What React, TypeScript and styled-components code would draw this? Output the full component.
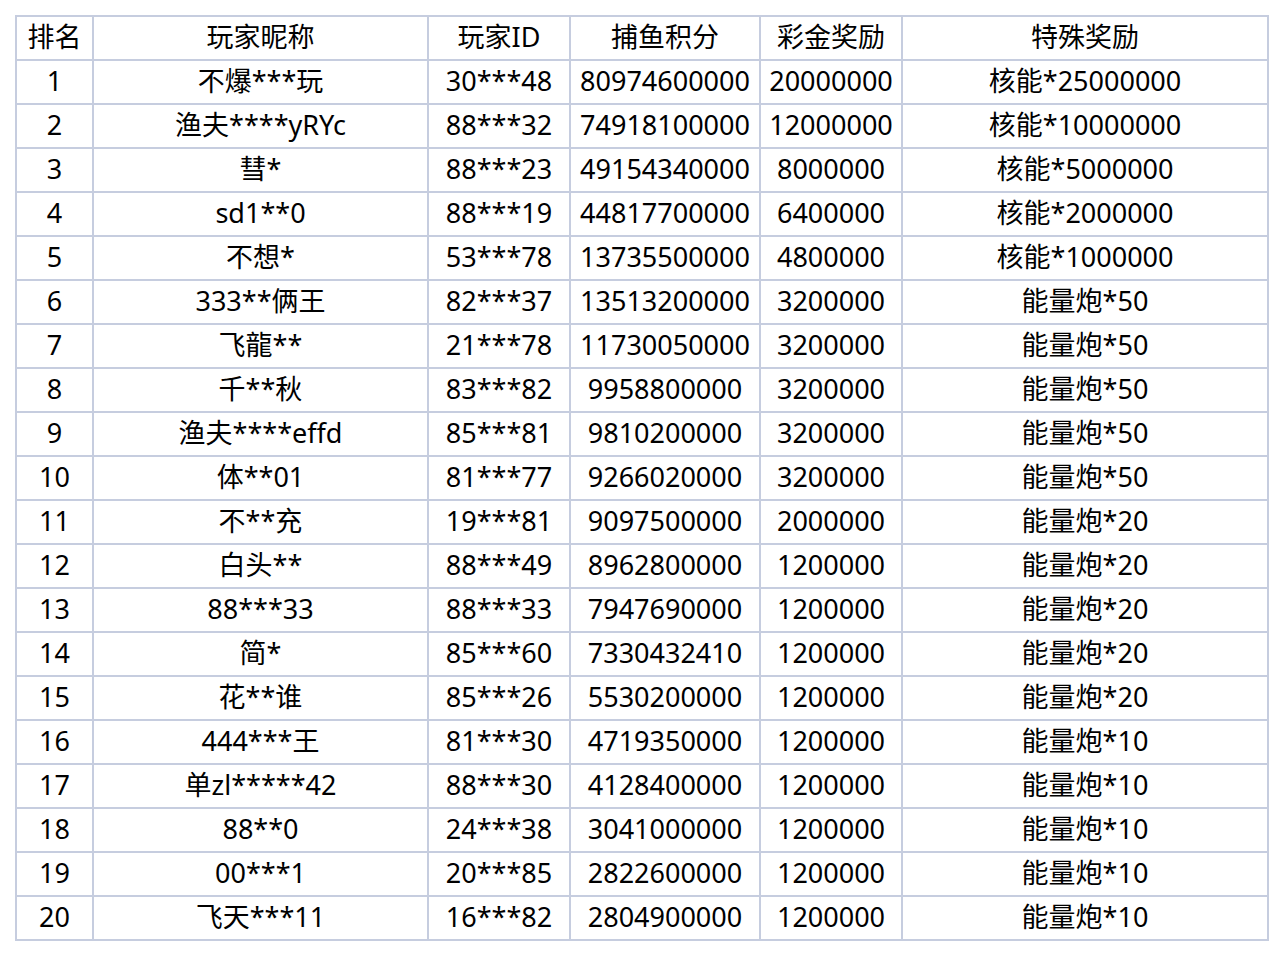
import { createGlobalStyle } from "styled-components";
import styled from "styled-components";

const GlobalStyle = createGlobalStyle`
  html, body {
    margin: 0;
    padding: 0;
    background: #ffffff;
  }
  body {
    font-family: "Noto Sans", "Noto Sans CJK SC", sans-serif;
  }
`;

const headers = ["排名", "玩家昵称", "玩家ID", "捕鱼积分", "彩金奖励", "特殊奖励"];

const rows: string[][] = [
  ["1", "不爆***玩", "30***48", "80974600000", "20000000", "核能*25000000"],
  ["2", "渔夫****yRYc", "88***32", "74918100000", "12000000", "核能*10000000"],
  ["3", "彗*", "88***23", "49154340000", "8000000", "核能*5000000"],
  ["4", "sd1**0", "88***19", "44817700000", "6400000", "核能*2000000"],
  ["5", "不想*", "53***78", "13735500000", "4800000", "核能*1000000"],
  ["6", "333**俩王", "82***37", "13513200000", "3200000", "能量炮*50"],
  ["7", "飞龍**", "21***78", "11730050000", "3200000", "能量炮*50"],
  ["8", "千**秋", "83***82", "9958800000", "3200000", "能量炮*50"],
  ["9", "渔夫****effd", "85***81", "9810200000", "3200000", "能量炮*50"],
  ["10", "体**01", "81***77", "9266020000", "3200000", "能量炮*50"],
  ["11", "不**充", "19***81", "9097500000", "2000000", "能量炮*20"],
  ["12", "白头**", "88***49", "8962800000", "1200000", "能量炮*20"],
  ["13", "88***33", "88***33", "7947690000", "1200000", "能量炮*20"],
  ["14", "简*", "85***60", "7330432410", "1200000", "能量炮*20"],
  ["15", "花**谁", "85***26", "5530200000", "1200000", "能量炮*20"],
  ["16", "444***王", "81***30", "4719350000", "1200000", "能量炮*10"],
  ["17", "单zl*****42", "88***30", "4128400000", "1200000", "能量炮*10"],
  ["18", "88**0", "24***38", "3041000000", "1200000", "能量炮*10"],
  ["19", "00***1", "20***85", "2822600000", "1200000", "能量炮*10"],
  ["20", "飞天***11", "16***82", "2804900000", "1200000", "能量炮*10"],
];

const Page = styled.div`
  padding: 15px 0 0 15px;
`;

const Table = styled.div`
  display: grid;
  grid-template-columns: 77px 335px 142px 190px 142px 366px;
  grid-auto-rows: 44px;
  width: max-content;
  border-top: 2px solid #c6cddf;
  border-left: 2px solid #c6cddf;
`;

const Cell = styled.div`
  box-sizing: border-box;
  display: flex;
  align-items: center;
  justify-content: center;
  border-right: 2px solid #c6cddf;
  border-bottom: 2px solid #c6cddf;
  font-size: 27px;
  line-height: 1;
  color: #000000;
  white-space: nowrap;
  padding-bottom: 4px;
`;

export default function App() {
  return (
    <Page>
      <GlobalStyle />
      <Table>
        {headers.map((h) => (
          <Cell key={h}>{h}</Cell>
        ))}
        {rows.map((r) =>
          r.map((v, i) => <Cell key={r[0] + "-" + i}>{v}</Cell>)
        )}
      </Table>
    </Page>
  );
}
